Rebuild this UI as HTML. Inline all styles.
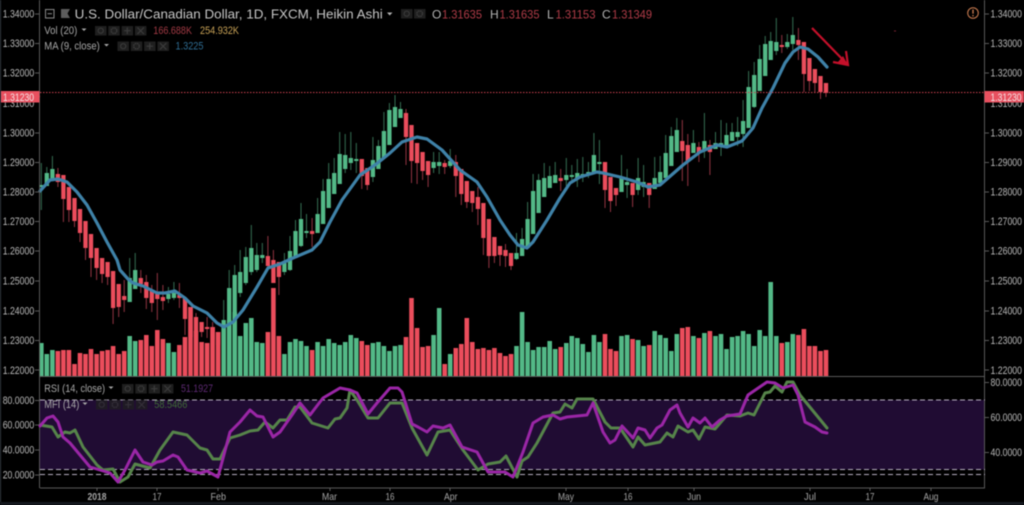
<!DOCTYPE html>
<html lang="en">
<head>
<meta charset="utf-8">
<title>USD/CAD Heikin Ashi chart</title>
<style>
html,body{margin:0;padding:0;background:#000;width:1024px;height:505px;overflow:hidden}
svg{display:block;position:absolute;left:0;top:0;filter:blur(.4px)}
text{font-family:"Liberation Sans",sans-serif}
.ax{font-size:11px;fill:#b8b8b8}
.lg{font-size:11px;fill:#a8a8a8}
.tm{font-size:10.5px;fill:#a4a4a4}
path{fill:none}
</style>
</head>
<body>
<svg width="1024" height="505" viewBox="0 0 1024 505" xmlns="http://www.w3.org/2000/svg">
<defs>
<g id="b"><rect x="0" y="0" width="11.5" height="9.5" fill="#1f1f1f"/></g>
<g id="eye"><use href="#b"/><circle cx="5.7" cy="4.7" r="2.6" stroke="#3c3c3c" stroke-width="1" fill="none"/></g>
<g id="gear"><use href="#b"/><circle cx="5.7" cy="4.7" r="2.8" stroke="#3c3c3c" stroke-width="1.4" fill="none" stroke-dasharray="1.6 .6"/></g>
<g id="plus"><use href="#b"/><path d="M2.5 4.7H9M5.7 1.5V8" stroke="#3c3c3c" stroke-width="1.2"/></g>
<g id="cross"><use href="#b"/><path d="M2.5 1.5L9 8M9 1.5L2.5 8" stroke="#3c3c3c" stroke-width="1.2"/></g>
<g id="four"><use href="#eye"/><use href="#gear" x="13.3"/><use href="#plus" x="26.6"/><use href="#cross" x="39.9"/></g>
</defs>

<rect width="1024" height="505" fill="#000"/>
<rect x="0" y="0" width="1" height="505" fill="#343a42"/>
<rect x="0" y="502" width="1024" height="3" fill="#14181e"/>

<!-- RSI band -->
<rect x="40" y="400" width="945" height="69.5" fill="#200c33"/>

<!-- candle wicks -->
<path stroke="#356f53" stroke-width="1" d="M41.3 163V210M46.8 167V186M52.4 156V180M129.7 258V302M135.2 253V289M168.4 287V303M173.9 282V300M223.7 300V345M229.2 270V325M234.7 265V315M240.2 250V297M245.8 247V285M251.3 225V275M256.8 243V272M262.3 243V263M284.4 253V275M290 236V271M295.5 220V258M301 203V247M306.5 214V238M317.6 198V233M323.1 179V224M328.7 163V208M334.2 158V194M339.7 132V184M345.2 134V173M350.8 132V170M356.3 143V173M372.9 137V182M378.4 140V169M383.9 112V158M389.4 103V145M395 95V127M400.5 102V118M433.6 152V173M439.2 152V174M450.2 149V168M516.5 233V260M522.1 228V256M527.6 202V248M533.1 174V234M538.6 174V213M544.2 163V197M549.7 166V188M555.2 162V183M566.3 158V186M571.8 165V182M577.3 159V187M582.8 157V182M588.4 162V178M593.9 133V173M599.4 140V184M621.5 155V192M627.1 169V198M638.1 158V195M643.6 165V197M654.7 157V189M660.2 156V183M665.7 135V178M671.3 127V166M676.8 118V152M693.4 130V153M704.4 113V158M715.5 132V149M721 120V156M726.5 123V146M732.1 123V141M737.6 117V146M743.1 100V147M748.6 71V128M754.2 62V108M759.7 45V91M765.2 36V76M770.7 32V60M776.3 18V55M787.3 34V49M792.8 17V50"/>
<path stroke="#923442" stroke-width="1" d="M57.9 168V187M63.4 175V222M68.9 187V222M74.5 198V227M80 209V242M85.5 221V260M91 234V277M96.6 248V280M102.1 258V283M107.6 262V285M113.1 271V324M118.7 284V317M124.2 280V312M140.8 270V293M146.3 275V309M151.8 285V312M157.3 273V320M162.9 285V310M179.4 283V308M185 298V335M190.5 307V337M196 313V337M201.6 322V337M207.1 317V338M212.6 322V345M218.1 332V345M267.9 236V268M273.4 250V283M278.9 262V295M312.1 218V247M361.8 159V189M367.3 168V190M406 109V165M411.5 125V183M417.1 143V184M422.6 152V180M428.1 161V187M444.7 160V174M455.8 155V197M461.3 169V205M466.8 181V208M472.3 191V212M477.9 187V225M483.4 203V255M488.9 219V268M494.4 237V263M500 246V266M505.5 244V267M511 253V270M560.7 169V191M605 162V208M610.5 177V212M616 188V206M632.6 183V207M649.2 183V208M682.3 120V181M687.8 134V186M698.9 142V162M709.9 140V175M781.8 35V53M798.4 28V60M803.9 42V92M809.4 58V91M814.9 69V92M820.5 76V99M826 83V97"/>

<!-- candle bodies -->
<path stroke="#53b987" stroke-width="4.3" d="M41.3 185V187M46.8 173V186M52.4 169V180M129.7 278V302M135.2 270V289M168.4 294V299M173.9 293V298M223.7 320V345M229.2 288V320M234.7 275V312M240.2 272V293M245.8 257V283M251.3 248V272M256.8 255V270M262.3 255V258M284.4 263V272M290 251V270M295.5 231V258M301 219V246M306.5 231V233M317.6 214V233M323.1 191V224M328.7 179V208M334.2 173V194M339.7 154V184M345.2 155V169M350.8 158V163M356.3 159V161M372.9 160V177M378.4 146V169M383.9 131V158M389.4 110V145M395 107V127M400.5 109V118M433.6 162V168M439.2 162V166M450.2 161V166M516.5 253V259M522.1 239V256M527.6 219V248M533.1 191V234M538.6 180V213M544.2 178V197M549.7 176V188M555.2 175V183M566.3 175V180M571.8 175V177M577.3 173V178M582.8 174V177M588.4 172V175M593.9 155V173M599.4 162V164M621.5 177V192M627.1 182V185M638.1 178V190M643.6 182V187M654.7 178V189M660.2 172V183M665.7 153V178M671.3 136V166M676.8 130V152M693.4 143V153M704.4 141V150M715.5 143V149M721 143V147M726.5 135V146M732.1 132V141M737.6 132V137M743.1 121V134M748.6 87V128M754.2 75V107M759.7 59V91M765.2 44V76M770.7 41V60M776.3 42V51M787.3 42V47M792.8 35V44"/>
<path stroke="#eb4d5c" stroke-width="4.3" d="M57.9 174V182M63.4 175V199M68.9 187V210M74.5 198V221M80 209V233M85.5 221V248M91 234V258M96.6 248V268M102.1 258V274M107.6 262V277M113.1 271V308M118.7 284V307M124.2 296V300M140.8 278V284M146.3 282V298M151.8 290V303M157.3 293V299M162.9 297V301M179.4 295V298M185 298V319M190.5 307V337M196 317V332M201.6 322V332M207.1 327V329M212.6 327V340M218.1 332V345M267.9 256V266M273.4 260V283M278.9 262V277M312.1 231V234M361.8 159V176M367.3 168V185M406 113V137M411.5 125V161M417.1 143V163M422.6 152V171M428.1 161V175M444.7 163V167M455.8 162V176M461.3 169V194M466.8 181V202M472.3 191V203M477.9 197V209M483.4 203V238M488.9 219V256M494.4 237V256M500 246V255M505.5 250V256M511 253V266M560.7 178V181M605 162V190M610.5 177V201M616 188V195M632.6 183V195M649.2 183V195M682.3 141V151M687.8 145V161M698.9 147V153M709.9 145V152M781.8 45V47M798.4 40V45M803.9 42V74M809.4 58V81M814.9 69V83M820.5 76V92M826 83V93"/>

<!-- volume -->
<path stroke="#53b987" stroke-width="4.6" d="M41.3 343V376M46.8 354V376M52.4 350V376M129.7 336V376M135.2 341V376M168.4 343V376M173.9 352V376M223.7 327V376M229.2 320V376M234.7 312V376M240.2 336V376M245.8 323V376M251.3 318V376M256.8 342V376M262.3 343V376M284.4 354V376M290 342V376M295.5 339V376M301 341V376M306.5 346V376M317.6 342V376M323.1 346V376M328.7 339V376M334.2 343V376M339.7 345V376M345.2 342V376M350.8 335V376M356.3 338V376M372.9 343V376M378.4 342V376M383.9 346V376M389.4 351V376M395 346V376M400.5 345V376M433.6 335V376M439.2 308V376M450.2 354V376M516.5 346V376M522.1 312V376M527.6 342V376M533.1 350V376M538.6 347V376M544.2 347V376M549.7 341V376M555.2 349V376M566.3 343V376M571.8 336V376M577.3 338V376M582.8 344V376M588.4 352V376M593.9 335V376M599.4 342V376M621.5 336V376M627.1 335V376M638.1 340V376M643.6 346V376M654.7 331V376M660.2 335V376M665.7 338V376M671.3 351V376M676.8 334V376M693.4 336V376M704.4 333V376M715.5 336V376M721 334V376M726.5 349V376M732.1 337V376M737.6 336V376M743.1 331V376M748.6 334V376M754.2 346V376M759.7 330V376M765.2 336V376M770.7 282V376M776.3 336V376M787.3 342V376M792.8 334V376"/>
<path stroke="#eb4d5c" stroke-width="4.6" d="M57.9 351V376M63.4 350V376M68.9 350V376M74.5 364V376M80 353V376M85.5 354V376M91 349V376M96.6 354V376M102.1 351V376M107.6 350V376M113.1 346V376M118.7 354V376M124.2 351V376M140.8 340V376M146.3 335V376M151.8 346V376M157.3 330V376M162.9 339V376M179.4 345V376M185 337V376M190.5 307V376M196 331V376M201.6 342V376M207.1 343V376M212.6 327V376M218.1 332V376M267.9 332V376M273.4 288V376M278.9 336V376M312.1 350V376M361.8 341V376M367.3 345V376M406 337V376M411.5 298V376M417.1 328V376M422.6 347V376M428.1 346V376M444.7 364V376M455.8 348V376M461.3 344V376M466.8 318V376M472.3 342V376M477.9 349V376M483.4 348V376M488.9 350V376M494.4 348V376M500 353V376M505.5 356V376M511 354V376M560.7 347V376M605 334V376M610.5 349V376M616 351V376M632.6 339V376M649.2 345V376M682.3 328V376M687.8 327V376M698.9 338V376M709.9 331V376M781.8 343V376M798.4 335V376M803.9 329V376M809.4 346V376M814.9 346V376M820.5 351V376M826 350V376"/>

<!-- MA line -->
<path stroke="#3f82a8" stroke-width="3.2" stroke-linejoin="round" stroke-linecap="round" d="M40 191L50 180L58 179L67 182L77 192L87 205L97 223L107 242L117 260L120 270L128 279L133 283L143 286L157 293L165 293L175 291L185 298L193 306L207 313L217 323L224 327L233 322L243 310L257 287L268 268L280 264L293 258L312 250L320 242L330 222L342 200L360 175L375 165L390 153L402 142L417 137L427 139L442 150L460 170L477 182L487 197L500 220L510 235L518 245L527 248L533 242L547 220L560 198L570 183L580 177L597 172L603 173L620 177L637 182L648 187L660 185L683 165L700 152L717 145L727 147L742 141L753 128L762 108L773 88L785 63L793 52L800 47L808 49L818 57L827 67"/>

<!-- price line -->
<path stroke="#c8404e" stroke-width="1" stroke-dasharray="1.5 1.5" d="M40 92.5H985"/>

<!-- red arrow -->
<path stroke="#c4102a" stroke-width="2.2" d="M812 28L848 65M846 51L848 65L833 62"/>
<path style="fill:#c4102a" d="M843 56L848 65L838 62Z"/>
<rect x="894" y="30.5" width="2" height="1" fill="#7a2030"/>

<!-- axes -->
<path stroke="#5a5a5a" stroke-width="1" d="M39.5 0V488M984.5 0V488M40 376.5H985M40 488H985"/>
<path stroke="#5a5a5a" stroke-width="1" d="M35 14H39M35 43.5H39M35 73H39M35 133H39M35 162.5H39M35 192H39M35 221.5H39M35 251H39M35 281H39M35 311H39M35 340.5H39M35 370H39M35 400.5H39M35 425H39M35 450H39M35 475H39M985 14H989M985 43.5H989M985 73H989M985 133H989M985 162.5H989M985 192H989M985 221.5H989M985 251H989M985 281H989M985 311H989M985 340.5H989M985 370H989M985 382.5H989M985 417.5H989M985 452.5H989M97 488V491M157 488V491M218 488V491M330 488V491M390 488V491M450 488V491M566 488V491M628 488V491M694 488V491M810 488V491M870 488V491M931 488V491"/>

<!-- RSI dashed -->
<path stroke="#b6aec0" stroke-width="1" stroke-dasharray="5 3" d="M40 400H985M40 469.5H985M40 474.5H985"/>

<!-- MFI -->
<path stroke="#56844a" stroke-width="3" stroke-linejoin="round" stroke-linecap="round" d="M40 425L52 427L58 437L65 432L70 433L75 430L83 447L97 465L103 470L113 469L120 482L128 477L135 464L150 468L160 450L173 432L187 435L200 448L207 450L213 459L220 459L230 438L240 435L250 431L258 430L265 422L273 428L280 420L287 420L295 407L300 407L312 423L328 428L335 419L340 418L347 408L350 390L357 400L368 418L378 418L390 403L402 403L412 428L427 455L438 432L450 430L463 450L478 470L488 464L500 462L506 456L517 477L522 461L528 457L537 443L553 413L560 412L565 404L572 408L577 399L593 399L605 422L611 428L620 428L633 447L638 437L645 445L660 442L667 433L673 437L678 426L688 432L693 430L699 439L705 427L715 429L727 415L740 416L748 413L754 415L765 393L770 392L775 386L782 392L787 382L793 382L800 395L827 428"/>
<!-- RSI -->
<path stroke="#9a26a6" stroke-width="3" stroke-linejoin="round" stroke-linecap="round" d="M40 426L47 418L53 416L58 422L63 437L70 443L80 455L90 467L100 470L110 473L118 482L125 470L135 450L143 462L152 465L157 462L163 461L173 455L178 457L187 470L200 473L207 471L218 477L230 432L240 422L250 410L257 416L263 417L273 437L280 432L292 415L300 403L310 415L323 398L340 388L350 390L357 393L368 414L377 403L390 388L398 388L402 392L412 424L418 427L427 432L433 426L443 428L450 425L462 447L477 452L488 472L505 472L513 477L523 452L533 423L543 417L553 415L560 419L567 417L587 415L593 403L603 432L610 443L615 440L622 426L633 438L638 428L645 430L650 438L657 428L662 425L670 410L677 405L680 413L688 427L693 418L700 423L705 418L712 427L720 420L727 416L740 414L748 395L767 382L775 383L783 388L793 385L798 395L805 422L815 427L822 432L827 433"/>

<!-- left axis labels -->
<g class="ax">
<text x="2.7" y="17.5" textLength="31.5" lengthAdjust="spacingAndGlyphs">1.34000</text>
<text x="2.7" y="47" textLength="31.5" lengthAdjust="spacingAndGlyphs">1.33000</text>
<text x="2.7" y="76.5" textLength="31.5" lengthAdjust="spacingAndGlyphs">1.32000</text>
<text x="2.7" y="107" textLength="31.5" lengthAdjust="spacingAndGlyphs">1.31000</text>
<text x="2.7" y="136.5" textLength="31.5" lengthAdjust="spacingAndGlyphs">1.30000</text>
<text x="2.7" y="166" textLength="31.5" lengthAdjust="spacingAndGlyphs">1.29000</text>
<text x="2.7" y="195.5" textLength="31.5" lengthAdjust="spacingAndGlyphs">1.28000</text>
<text x="2.7" y="225" textLength="31.5" lengthAdjust="spacingAndGlyphs">1.27000</text>
<text x="2.7" y="254.5" textLength="31.5" lengthAdjust="spacingAndGlyphs">1.26000</text>
<text x="2.7" y="284.5" textLength="31.5" lengthAdjust="spacingAndGlyphs">1.25000</text>
<text x="2.7" y="314.5" textLength="31.5" lengthAdjust="spacingAndGlyphs">1.24000</text>
<text x="2.7" y="344" textLength="31.5" lengthAdjust="spacingAndGlyphs">1.23000</text>
<text x="2.7" y="374" textLength="31.5" lengthAdjust="spacingAndGlyphs">1.22000</text>
<text x="2.7" y="404" textLength="31.5" lengthAdjust="spacingAndGlyphs">80.0000</text>
<text x="2.7" y="428.5" textLength="31.5" lengthAdjust="spacingAndGlyphs">60.0000</text>
<text x="2.7" y="453.5" textLength="31.5" lengthAdjust="spacingAndGlyphs">40.0000</text>
<text x="2.7" y="478.5" textLength="31.5" lengthAdjust="spacingAndGlyphs">20.0000</text>
</g>
<!-- right axis labels -->
<g class="ax">
<text x="990.5" y="17.5" textLength="31.5" lengthAdjust="spacingAndGlyphs">1.34000</text>
<text x="990.5" y="47" textLength="31.5" lengthAdjust="spacingAndGlyphs">1.33000</text>
<text x="990.5" y="76.5" textLength="31.5" lengthAdjust="spacingAndGlyphs">1.32000</text>
<text x="990.5" y="107" textLength="31.5" lengthAdjust="spacingAndGlyphs">1.31000</text>
<text x="990.5" y="136.5" textLength="31.5" lengthAdjust="spacingAndGlyphs">1.30000</text>
<text x="990.5" y="166" textLength="31.5" lengthAdjust="spacingAndGlyphs">1.29000</text>
<text x="990.5" y="195.5" textLength="31.5" lengthAdjust="spacingAndGlyphs">1.28000</text>
<text x="990.5" y="225" textLength="31.5" lengthAdjust="spacingAndGlyphs">1.27000</text>
<text x="990.5" y="254.5" textLength="31.5" lengthAdjust="spacingAndGlyphs">1.26000</text>
<text x="990.5" y="284.5" textLength="31.5" lengthAdjust="spacingAndGlyphs">1.25000</text>
<text x="990.5" y="314.5" textLength="31.5" lengthAdjust="spacingAndGlyphs">1.24000</text>
<text x="990.5" y="344" textLength="31.5" lengthAdjust="spacingAndGlyphs">1.23000</text>
<text x="990.5" y="374" textLength="31.5" lengthAdjust="spacingAndGlyphs">1.22000</text>
<text x="990.5" y="386" textLength="31.5" lengthAdjust="spacingAndGlyphs">80.0000</text>
<text x="990.5" y="421" textLength="31.5" lengthAdjust="spacingAndGlyphs">60.0000</text>
<text x="990.5" y="456" textLength="31.5" lengthAdjust="spacingAndGlyphs">40.0000</text>
</g>

<!-- price tags -->
<rect x="1" y="91" width="38.5" height="11.5" fill="#e8505f"/>
<path stroke="#e8505f" stroke-width="1" d="M35 96.5H40"/>
<text x="3" y="100.8" font-size="11" fill="#f4e4e6" textLength="31" lengthAdjust="spacingAndGlyphs">1.31230</text>
<rect x="984.5" y="91" width="39.5" height="11.5" fill="#e8505f"/>
<text x="990.5" y="100.8" font-size="11" fill="#f4e4e6" textLength="31" lengthAdjust="spacingAndGlyphs">1.31230</text>

<!-- header -->
<rect x="45.5" y="9.5" width="8.5" height="8.5" fill="none" stroke="#8a8a8a" stroke-width="1"/>
<path stroke="#8a8a8a" stroke-width="1" d="M47.5 13.7H52"/>
<path style="fill:#5d5d5d" d="M61 9H70L67.5 13.5L70 18H61Z"/>
<text x="74.7" y="18.5" font-size="13" fill="#c6c6c6" textLength="308" lengthAdjust="spacingAndGlyphs">U.S. Dollar/Canadian Dollar, 1D, FXCM, Heikin Ashi</text>
<path style="fill:#b0b0b0" d="M387 12.5H392.5L389.7 15.5Z"/>
<use href="#eye" x="401" y="9"/><use href="#gear" x="414" y="9"/>
<text x="432" y="18.5" font-size="12" fill="#b4b4b4">O</text>
<text x="442" y="18.5" font-size="12" fill="#b03c48" textLength="40" lengthAdjust="spacingAndGlyphs">1.31635</text>
<text x="490" y="18.5" font-size="12" fill="#b4b4b4">H</text>
<text x="499.5" y="18.5" font-size="12" fill="#b03c48" textLength="40" lengthAdjust="spacingAndGlyphs">1.31635</text>
<text x="547" y="18.5" font-size="12" fill="#b4b4b4">L</text>
<text x="555.5" y="18.5" font-size="12" fill="#b03c48" textLength="40" lengthAdjust="spacingAndGlyphs">1.31153</text>
<text x="602" y="18.5" font-size="12" fill="#b4b4b4">C</text>
<text x="612" y="18.5" font-size="12" fill="#b03c48" textLength="40" lengthAdjust="spacingAndGlyphs">1.31349</text>

<!-- warning icon -->
<circle cx="973" cy="13" r="5.3" fill="none" stroke="#cf7f52" stroke-width="1"/>
<path stroke="#cf7f52" stroke-width="1.3" d="M973 9.5V13.8M973 15V16.4"/>

<!-- legends -->
<text class="lg" x="44.3" y="34" textLength="33" lengthAdjust="spacingAndGlyphs">Vol (20)</text>
<path style="fill:#a8a8a8" d="M81.5 28.500H86.5L84 31Z"/>
<use href="#four" x="95" y="26"/>
<text x="153.3" y="34" font-size="11" fill="#a23a44" textLength="38.700" lengthAdjust="spacingAndGlyphs">166.688K</text>
<text x="200" y="34" font-size="11" fill="#c8a256" textLength="39" lengthAdjust="spacingAndGlyphs">254.932K</text>

<text class="lg" x="44.3" y="49.5" textLength="55.5" lengthAdjust="spacingAndGlyphs">MA (9, close)</text>
<path style="fill:#a8a8a8" d="M104 44H109L106.5 46.5Z"/>
<use href="#four" x="117.5" y="41.5"/>
<text x="175.5" y="49.5" font-size="11" fill="#2f6d93" textLength="28" lengthAdjust="spacingAndGlyphs">1.3225</text>

<text class="lg" x="44.3" y="392" textLength="60.7" lengthAdjust="spacingAndGlyphs">RSI (14, close)</text>
<path style="fill:#a8a8a8" d="M108.5 386.5H113.5L111 389Z"/>
<use href="#four" x="122" y="384"/>
<text x="181" y="392" font-size="11" fill="#5e2a73" textLength="32" lengthAdjust="spacingAndGlyphs">51.1927</text>

<text class="lg" x="44.3" y="408" textLength="35" lengthAdjust="spacingAndGlyphs">MFI (14)</text>
<path style="fill:#a8a8a8" d="M82.5 402.5H87.5L85 405Z"/>
<g opacity=".75"><use href="#four" x="96" y="400"/></g>
<text x="154.3" y="408" font-size="11" fill="#3f6b37" textLength="33" lengthAdjust="spacingAndGlyphs">58.5466</text>

<!-- time axis -->
<g class="tm">
<text x="87.500" y="500" font-weight="bold" textLength="19" lengthAdjust="spacingAndGlyphs">2018</text>
<text x="152.500" y="500" textLength="9" lengthAdjust="spacingAndGlyphs">17</text>
<text x="210.500" y="500" textLength="15.500" lengthAdjust="spacingAndGlyphs">Feb</text>
<text x="322" y="500" textLength="15" lengthAdjust="spacingAndGlyphs">Mar</text>
<text x="385.500" y="500" textLength="9" lengthAdjust="spacingAndGlyphs">16</text>
<text x="444" y="500" textLength="13.500" lengthAdjust="spacingAndGlyphs">Apr</text>
<text x="558" y="500" textLength="16" lengthAdjust="spacingAndGlyphs">May</text>
<text x="623.500" y="500" textLength="9" lengthAdjust="spacingAndGlyphs">16</text>
<text x="687" y="500" textLength="14" lengthAdjust="spacingAndGlyphs">Jun</text>
<text x="804" y="500" textLength="12" lengthAdjust="spacingAndGlyphs">Jul</text>
<text x="865.500" y="500" textLength="9" lengthAdjust="spacingAndGlyphs">17</text>
<text x="923.500" y="500" textLength="15" lengthAdjust="spacingAndGlyphs">Aug</text>
</g>
</svg>
</body>
</html>
